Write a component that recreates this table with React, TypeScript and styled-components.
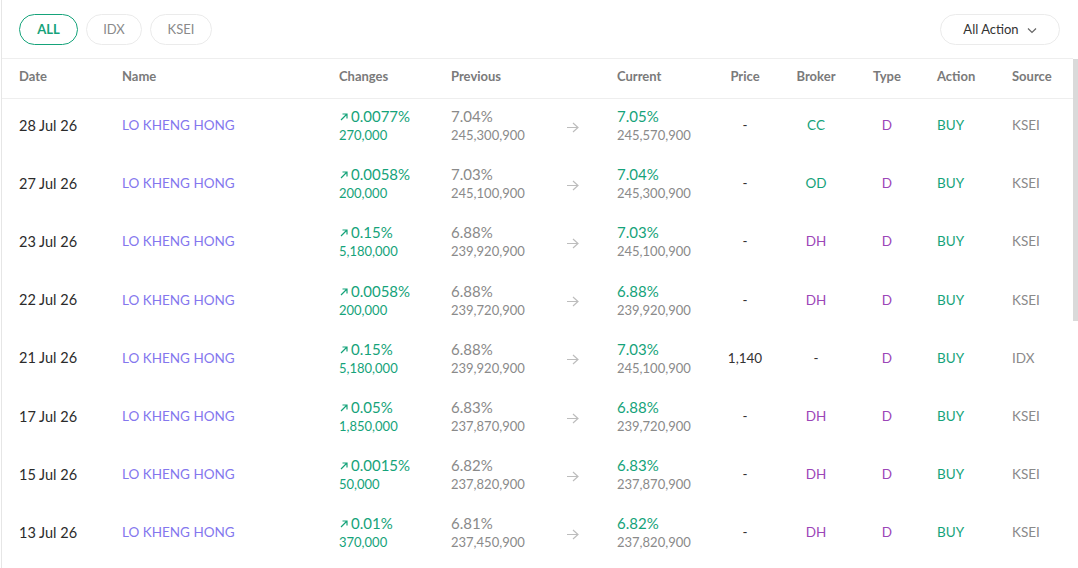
import React from 'react';
import styled, { createGlobalStyle } from 'styled-components';

const GlobalStyle = createGlobalStyle`
  html, body {
    margin: 0;
    padding: 0;
    background: #fff;
    font-family: Lato, 'Noto Sans', sans-serif;
  }
`;

interface Row {
  date: string;
  change: string;
  lot: string;
  prevPct: string;
  prevVal: string;
  curPct: string;
  curVal: string;
  price: string;
  broker: string;
  source: string;
}

const rows: Row[] = [
  { date: '28 Jul 26', change: '0.0077%', lot: '270,000', prevPct: '7.04%', prevVal: '245,300,900', curPct: '7.05%', curVal: '245,570,900', price: '-', broker: 'CC', source: 'KSEI' },
  { date: '27 Jul 26', change: '0.0058%', lot: '200,000', prevPct: '7.03%', prevVal: '245,100,900', curPct: '7.04%', curVal: '245,300,900', price: '-', broker: 'OD', source: 'KSEI' },
  { date: '23 Jul 26', change: '0.15%', lot: '5,180,000', prevPct: '6.88%', prevVal: '239,920,900', curPct: '7.03%', curVal: '245,100,900', price: '-', broker: 'DH', source: 'KSEI' },
  { date: '22 Jul 26', change: '0.0058%', lot: '200,000', prevPct: '6.88%', prevVal: '239,720,900', curPct: '6.88%', curVal: '239,920,900', price: '-', broker: 'DH', source: 'KSEI' },
  { date: '21 Jul 26', change: '0.15%', lot: '5,180,000', prevPct: '6.88%', prevVal: '239,920,900', curPct: '7.03%', curVal: '245,100,900', price: '1,140', broker: '-', source: 'IDX' },
  { date: '17 Jul 26', change: '0.05%', lot: '1,850,000', prevPct: '6.83%', prevVal: '237,870,900', curPct: '6.88%', curVal: '239,720,900', price: '-', broker: 'DH', source: 'KSEI' },
  { date: '15 Jul 26', change: '0.0015%', lot: '50,000', prevPct: '6.82%', prevVal: '237,820,900', curPct: '6.83%', curVal: '237,870,900', price: '-', broker: 'DH', source: 'KSEI' },
  { date: '13 Jul 26', change: '0.01%', lot: '370,000', prevPct: '6.81%', prevVal: '237,450,900', curPct: '6.82%', curVal: '237,820,900', price: '-', broker: 'DH', source: 'KSEI' },
  { date: '10 Jul 26', change: '0.02%', lot: '500,000', prevPct: '6.79%', prevVal: '236,950,900', curPct: '6.81%', curVal: '237,450,900', price: '-', broker: 'DH', source: 'KSEI' },
  { date: '08 Jul 26', change: '0.01%', lot: '300,000', prevPct: '6.78%', prevVal: '236,650,900', curPct: '6.79%', curVal: '236,950,900', price: '-', broker: 'DH', source: 'KSEI' },
  { date: '07 Jul 26', change: '0.0058%', lot: '200,000', prevPct: '6.77%', prevVal: '236,450,900', curPct: '6.78%', curVal: '236,650,900', price: '-', broker: 'DH', source: 'KSEI' },
  { date: '06 Jul 26', change: '0.03%', lot: '1,000,000', prevPct: '6.74%', prevVal: '235,450,900', curPct: '6.77%', curVal: '236,450,900', price: '-', broker: 'DH', source: 'KSEI' },
  { date: '03 Jul 26', change: '0.02%', lot: '700,000', prevPct: '6.72%', prevVal: '234,750,900', curPct: '6.74%', curVal: '235,450,900', price: '-', broker: 'DH', source: 'KSEI' },
  { date: '02 Jul 26', change: '0.01%', lot: '400,000', prevPct: '6.71%', prevVal: '234,350,900', curPct: '6.72%', curVal: '234,750,900', price: '-', broker: 'DH', source: 'KSEI' },
  { date: '01 Jul 26', change: '0.0058%', lot: '200,000', prevPct: '6.70%', prevVal: '234,150,900', curPct: '6.71%', curVal: '234,350,900', price: '-', broker: 'DH', source: 'KSEI' },
  { date: '30 Jun 26', change: '0.01%', lot: '350,000', prevPct: '6.69%', prevVal: '233,800,900', curPct: '6.70%', curVal: '234,150,900', price: '-', broker: 'DH', source: 'KSEI' },
];

const GREEN = '#15a37a';
const PURPLE = '#9b46b8';

const UpArrow = () => (
  <svg width="10" height="10" viewBox="0 0 10 10" fill="none" stroke={GREEN} strokeWidth="1.2">
    <path d="M2 8L8 2M3.5 2H8V6.5" />
  </svg>
);

const RightArrow = () => (
  <svg width="13" height="11" viewBox="0 0 13 11" fill="none" stroke="#bdbdbd" strokeWidth="1.2">
    <path d="M1 5.5H12M7 1L12 5.5L7 10" />
  </svg>
);

const Chevron = () => (
  <svg width="10" height="7" viewBox="0 0 10 7" fill="none" stroke="#666" strokeWidth="1.2">
    <path d="M1 1.5L5 5.5L9 1.5" />
  </svg>
);

const App = () => {
  return (
    <Page>
      <GlobalStyle />
      <Toolbar>
        <Pills>
          <Pill active w={59}>ALL</Pill>
          <Pill w={56}>IDX</Pill>
          <Pill w={62}>KSEI</Pill>
        </Pills>
        <ActionSelect>
          All Action <Chevron />
        </ActionSelect>
      </Toolbar>
      <ScrollArea>
        <Scroller>
          <HeaderRow>
            <HeadCell>Date</HeadCell>
            <HeadCell>Name</HeadCell>
            <HeadCell>Changes</HeadCell>
            <HeadCell>Previous</HeadCell>
            <HeadCell />
            <HeadCell>Current</HeadCell>
            <HeadCell align="center">Price</HeadCell>
            <HeadCell align="center">Broker</HeadCell>
            <HeadCell align="center">Type</HeadCell>
            <HeadCell indent>Action</HeadCell>
            <HeadCell>Source</HeadCell>
          </HeaderRow>
          {rows.map((r) => (
            <DataRow key={r.date}>
              <DateCell>{r.date}</DateCell>
              <NameCell>LO KHENG HONG</NameCell>
              <Stack>
                <Primary color={GREEN}>
                  <UpArrow />
                  {r.change}
                </Primary>
                <Secondary color={GREEN}>{r.lot}</Secondary>
              </Stack>
              <Stack>
                <Primary color="#8a8a8a">{r.prevPct}</Primary>
                <Secondary color="#8a8a8a">{r.prevVal}</Secondary>
              </Stack>
              <ArrowCell>
                <RightArrow />
              </ArrowCell>
              <Stack>
                <Primary color={GREEN}>{r.curPct}</Primary>
                <Secondary color="#8a8a8a">{r.curVal}</Secondary>
              </Stack>
              <Tag align="center" color="#333">{r.price}</Tag>
              <Tag
                align="center"
                color={r.broker === '-' ? '#333' : r.broker === 'DH' ? PURPLE : GREEN}
              >
                {r.broker}
              </Tag>
              <Tag align="center" color={PURPLE}>D</Tag>
              <Tag indent color={GREEN}>BUY</Tag>
              <Tag color="#8a8a8a">{r.source}</Tag>
            </DataRow>
          ))}
        </Scroller>
        <Thumb />
      </ScrollArea>
    </Page>
  );
};

const Page = styled.div`
  height: 100vh;
  display: flex;
  flex-direction: column;
  margin-left: 1px;
  border-left: 1px solid #e6e6e6;
  box-sizing: border-box;
`;

const Toolbar = styled.div`
  height: 58px;
  flex-shrink: 0;
  display: flex;
  align-items: center;
  justify-content: space-between;
  padding: 0 18px 0 17px;
  box-sizing: border-box;
`;

const Pills = styled.div`
  display: flex;
  gap: 8px;
`;

const Pill = styled.button<{ active?: boolean; w: number }>`
  width: ${({ w }) => w}px;
  height: 31px;
  padding: 0;
  border-radius: 16px;
  background: #fff;
  border: 1px solid ${({ active }) => (active ? GREEN : '#ebebeb')};
  color: ${({ active }) => (active ? GREEN : '#8a8a8a')};
  font-family: inherit;
  font-size: 13px;
  font-weight: ${({ active }) => (active ? 700 : 400)};
  cursor: pointer;
`;

const ActionSelect = styled.button`
  height: 31px;
  width: 120px;
  display: flex;
  align-items: center;
  justify-content: center;
  gap: 8px;
  border-radius: 16px;
  background: #fff;
  border: 1px solid #ebebeb;
  color: #333;
  font-family: inherit;
  font-size: 13px;
  cursor: pointer;

  svg {
    margin-top: 2px;
  }
`;

const ScrollArea = styled.div`
  position: relative;
  flex: 1;
  min-height: 0;
`;

const Scroller = styled.div`
  height: 100%;
  margin-right: 5px;
  overflow-y: auto;
  scrollbar-width: none;

  &::-webkit-scrollbar {
    display: none;
  }
`;

const Thumb = styled.div`
  position: absolute;
  top: 1px;
  right: 0;
  width: 5px;
  height: 262px;
  background: #dadada;
`;

const GRID = '103px 217px 112px 76px 90px 102px 52px 90px 52px 99px 1fr';

const HeaderRow = styled.div`
  display: grid;
  grid-template-columns: ${GRID};
  align-items: center;
  height: 41px;
  box-sizing: border-box;
  padding: 0 0 5px 17px;
  border-top: 1px solid #eeeeee;
  border-bottom: 1px solid #eeeeee;
`;

const HeadCell = styled.div<{ align?: string; indent?: boolean }>`
  font-size: 13px;
  font-weight: 700;
  color: #7a7a7a;
  text-align: ${({ align }) => align || 'left'};
  padding-left: ${({ indent }) => (indent ? '24px' : '0')};
`;

const DataRow = styled.div`
  display: grid;
  grid-template-columns: ${GRID};
  align-items: center;
  height: 58.2px;
  box-sizing: border-box;
  padding: 0 0 6px 17px;
  white-space: nowrap;
`;

const DateCell = styled.div`
  font-size: 14.5px;
  color: #2b2b2b;
`;

const NameCell = styled.div`
  font-size: 13.5px;
  color: #8477ee;
`;

const Stack = styled.div`
  display: flex;
  flex-direction: column;
  gap: 2px;
`;

const Primary = styled.div<{ color: string }>`
  display: flex;
  align-items: center;
  gap: 2px;
  font-size: 15px;
  line-height: 18px;
  color: ${({ color }) => color};

  svg {
    margin-top: 2px;
  }
`;

const Secondary = styled.div<{ color: string }>`
  font-size: 13px;
  line-height: 16px;
  color: ${({ color }) => color};
`;

const ArrowCell = styled.div`
  display: flex;
  justify-content: center;
  padding-top: 4px;
`;

const Tag = styled.div<{ color: string; align?: string; indent?: boolean }>`
  font-size: 13.5px;
  color: ${({ color }) => color};
  text-align: ${({ align }) => align || 'left'};
  padding-left: ${({ indent }) => (indent ? '24px' : '0')};
`;

export default App;
